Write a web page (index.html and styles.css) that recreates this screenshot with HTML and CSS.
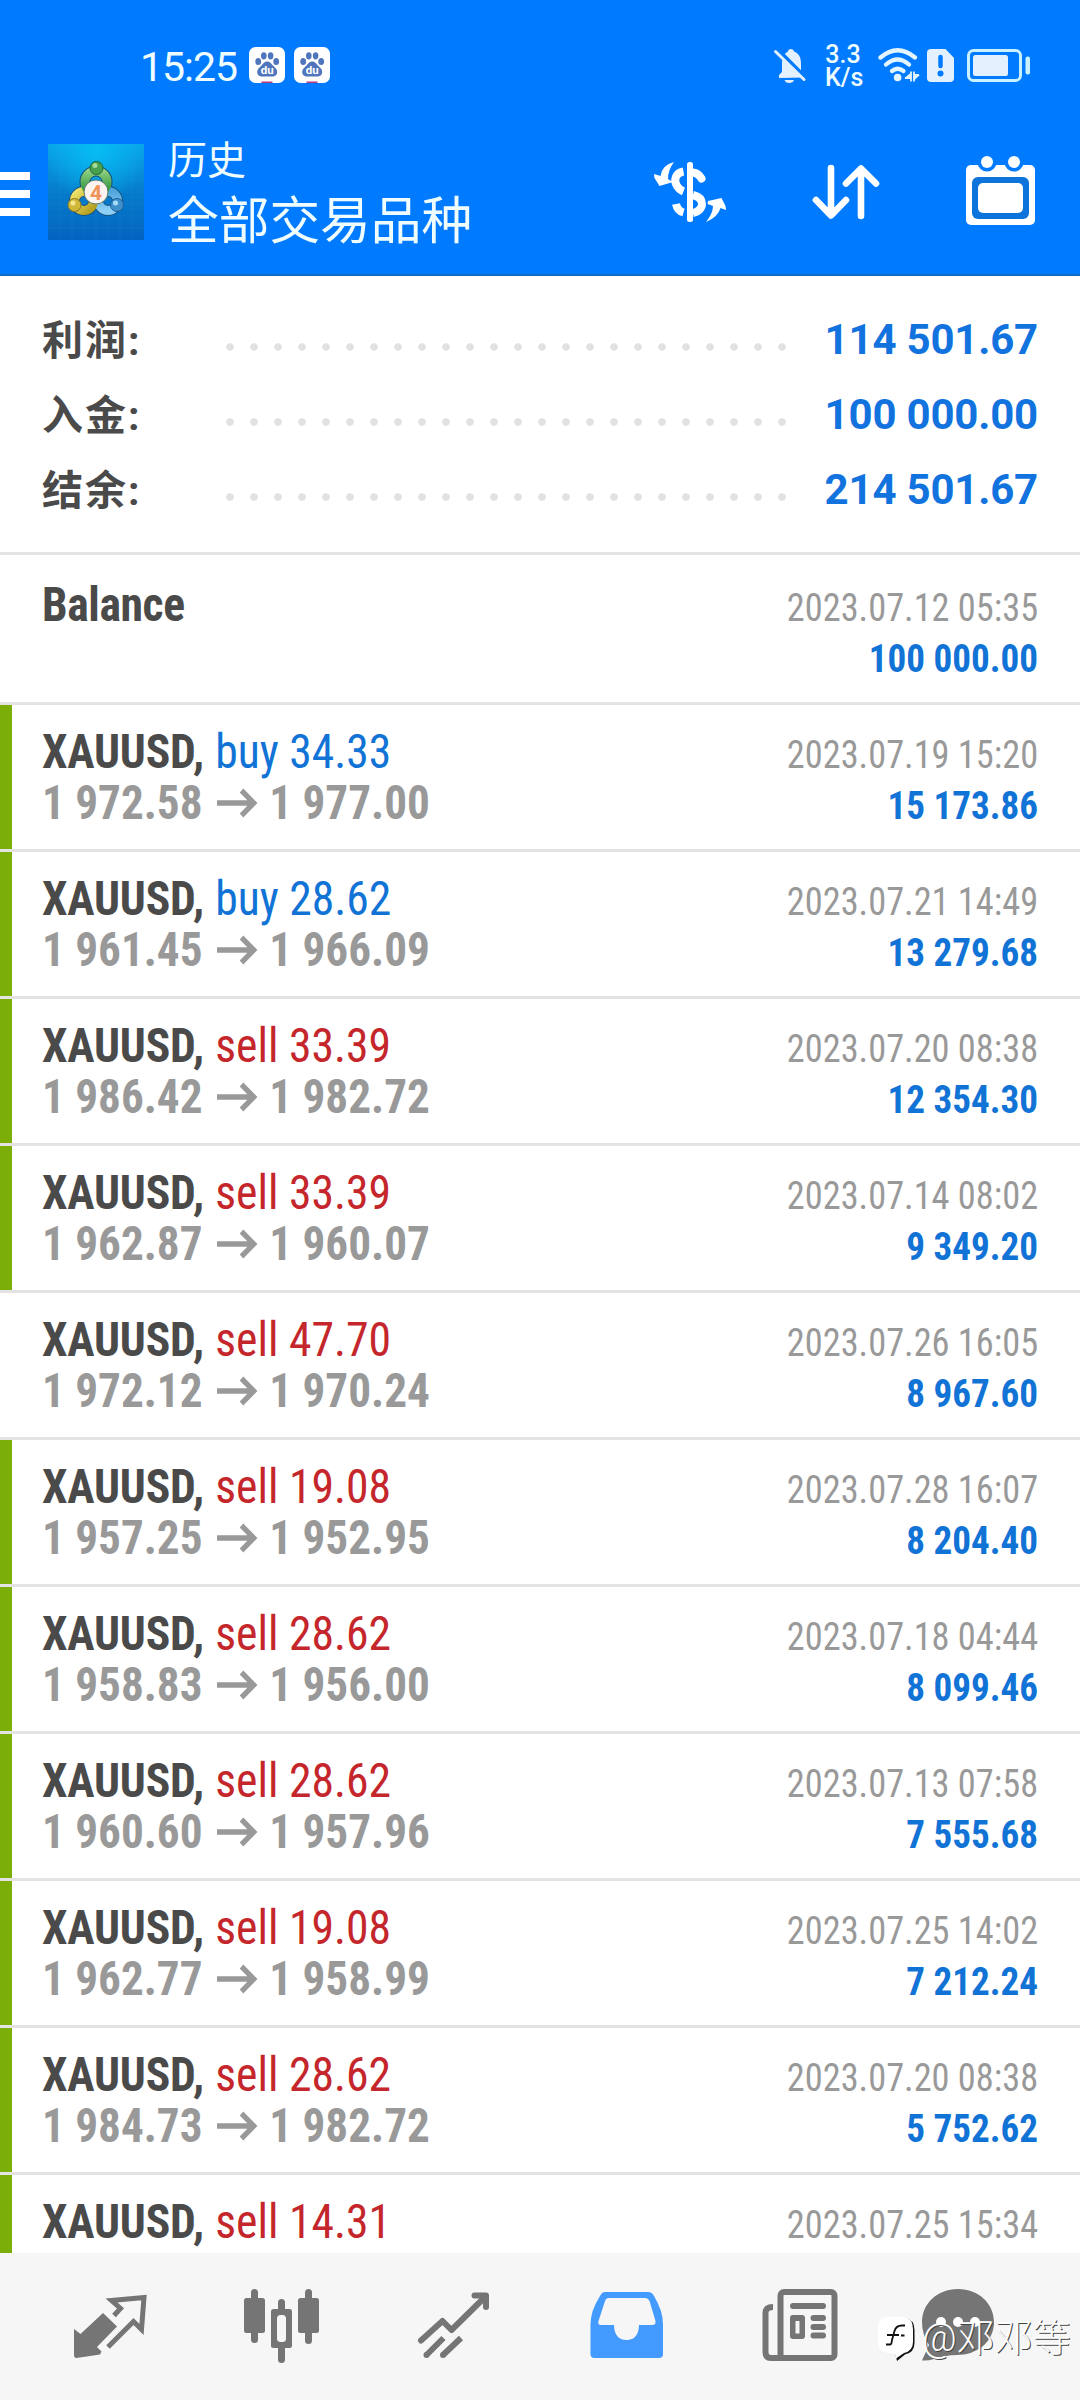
FILE: index.html
```html
<!DOCTYPE html>
<html lang="zh">
<head>
<meta charset="utf-8">
<title>历史</title>
<link rel="stylesheet" href="styles.css">
</head>
<body>
<svg class="defs">
  <symbol id="arrow" viewBox="0 0 44 30"><path d="M1 15H40M27 2.500L40 15L27 27.500" fill="none" stroke="currentColor" stroke-width="5.500"/></symbol>
  <symbol id="paw" viewBox="0 0 36 36">
    <rect width="36" height="36" rx="6.500" fill="#fff"/>
    <g fill="#4f76bd"><ellipse cx="9.200" cy="14.500" rx="2.900" ry="3.500"/><ellipse cx="14.800" cy="8.800" rx="2.800" ry="3.600"/><ellipse cx="21.600" cy="8.800" rx="2.800" ry="3.600"/><ellipse cx="27.200" cy="14.500" rx="2.900" ry="3.500"/><path d="M18.200 14.500c-3 0-4 2.300-6 4.200-2 1.900-4 3.400-4 6.300 0 3 2.300 4.500 5 4.500h10c2.700 0 5-1.500 5-4.500 0-2.900-2-4.400-4-6.300-2-1.900-3-4.200-6-4.200z"/></g>
    <text x="18.200" y="27" text-anchor="middle" font-size="11.500" font-weight="700" fill="#fff">du</text>
    <rect x="12.500" y="34.500" width="11" height="1.500" fill="#b43c78"/>
  </symbol>
</svg>

<header class="top">
  <div class="status">
    <time class="clock">15:25</time>
    <svg class="paw"><use href="#paw"/></svg>
    <svg class="paw"><use href="#paw"/></svg>
    <svg class="bell" viewBox="773 45 34 40"><path d="M779 78v-3l3-3V64c0-8 3-11 6-12.500 0-3 5-3.500 6 0 5 2 7 6 7 12v8l3 6z" fill="#e3f1ff"/><path d="M784.500 80h9.500c-.8 4-8.700 4-9.500 0z" fill="#e3f1ff"/><path d="M777 49L806 78" stroke="#007aff" stroke-width="4"/><path d="M775.500 51.500L804 79.500" stroke="#e3f1ff" stroke-width="3" stroke-linecap="round"/></svg>
    <div class="speed"><span>3.3</span><span>K/s</span></div>
    <svg class="wifi" viewBox="876 45 44 40"><g fill="none" stroke="#e3f6ff" stroke-width="4.300" stroke-linecap="round"><path d="M880.500 57.500Q897.500 43 915 57.500"/><path d="M886 64.500Q897.500 54.500 909 64.500"/><path d="M892 71Q897.500 66.500 903.500 71"/></g><circle cx="897.600" cy="77.500" r="3.800" fill="#e3f6ff"/><path d="M911 71.500v10M905 78h6M914 71.500v10M919 75h-5" stroke="#e3f6ff" stroke-width="1.800"/><path d="M904.500 78L911 72.500V78zM920 75L914 80.500V75z" fill="#e3f6ff"/></svg>
    <svg class="sim" viewBox="927 48 27 33"><path d="M4 0h14.500L27 9v20a4 4 0 0 1-4 4H4a4 4 0 0 1-4-4V4a4 4 0 0 1 4-4z" transform="translate(927 48)" fill="#e3f1ff"/><path d="M940.500 56v9" stroke="#007aff" stroke-width="4.500" stroke-linecap="round"/><circle cx="940.500" cy="72.500" r="3" fill="#007aff"/></svg>
    <svg class="battery" viewBox="966 48 65 35"><rect x="968.500" y="50.500" width="52" height="30" rx="5" fill="none" stroke="#c8f2ff" stroke-width="3"/><rect x="973" y="55" width="35" height="21" rx="2.500" fill="#e3f1ff"/><rect x="1025.500" y="56.500" width="4.500" height="18" rx="2" fill="#c8f2ff"/></svg>
  </div>
  <div class="bar">
    <svg class="menu" viewBox="0 0 30 44"><path d="M0 4h30M0 22h30M0 40h30" stroke="#fff" stroke-width="8"/></svg>
    <svg class="logo" viewBox="0 0 96 96">
      <defs>
        <linearGradient id="sky" x1="0" y1="0" x2="0" y2="1"><stop offset="0" stop-color="#0aa3ea"/><stop offset=".5" stop-color="#067ccb"/><stop offset="1" stop-color="#0463c0"/></linearGradient>
        <radialGradient id="glow" cx=".5" cy=".05" r=".55"><stop offset="0" stop-color="#06bdf2"/><stop offset="1" stop-color="#06bdf2" stop-opacity="0"/></radialGradient>
        <linearGradient id="gr" x1="0" y1="0" x2="0" y2="1"><stop offset="0" stop-color="#8fce82"/><stop offset="1" stop-color="#268f35"/></linearGradient>
        <linearGradient id="ye" x1="0" y1="0" x2="1" y2="1"><stop offset="0" stop-color="#eee36c"/><stop offset="1" stop-color="#b49c1c"/></linearGradient>
        <linearGradient id="bl" x1="0" y1="0" x2="0" y2="1"><stop offset="0" stop-color="#4fa5dc"/><stop offset="1" stop-color="#8ed0f5"/></linearGradient>
      </defs>
      <rect width="96" height="96" fill="url(#sky)"/><rect width="96" height="96" fill="url(#glow)"/>
      <path d="M0 12h96M0 24h96M0 36h96M0 48h96M0 60h96M0 72h96M0 84h96M12 0v96M24 0v96M36 0v96M48 0v96M60 0v96M72 0v96M84 0v96" stroke="#3cb4f0" stroke-opacity=".1"/>
      <g fill="none" stroke-width="11" stroke="#17507a"><circle cx="36" cy="57" r="9.500"/><circle cx="60" cy="57" r="9.500"/><circle cx="48" cy="38" r="11"/></g>
      <g fill="none" stroke-width="9"><circle cx="60" cy="57" r="9.500" stroke="url(#bl)"/><circle cx="36" cy="57" r="9.500" stroke="url(#ye)"/><circle cx="48" cy="38" r="11" stroke="url(#gr)"/></g>
      <circle cx="48.500" cy="24" r="6.500" fill="#49a04e" stroke="#1d6a33"/><circle cx="47" cy="21.500" r="2.500" fill="#a4d99a"/>
      <circle cx="26.500" cy="61" r="6.500" fill="#cfb73a" stroke="#8b7a1c"/><circle cx="25" cy="59" r="2.500" fill="#f3e98c"/>
      <circle cx="69" cy="61" r="6.500" fill="#3f8fcb" stroke="#1a5e97"/><circle cx="67.500" cy="59" r="2.500" fill="#a6dcf8"/>
      <circle cx="48" cy="48" r="12" fill="#fbf4f0" stroke="#567c6a" stroke-width="1"/>
      <text x="48" y="56" text-anchor="middle" font-size="21" font-weight="700" fill="#f0935a">4</text>
    </svg>
    <div class="titles"><p class="crumb">历史</p><h1>全部交易品种</h1></div>
    <svg class="action" viewBox="612 134 156 116"><g fill="none" stroke="#fff" stroke-width="8"><path d="M683.500 171.500C675 173 673.500 181 677 186 679 189 681 190.500 683.500 191.500"/><path d="M693 172.500C697 173 699.500 175 701.500 178.500" stroke-linecap="round"/><path d="M676 204c1 5 4 7.500 7.500 8.500"/><path d="M693 195c8 2 9 6 9 9 0 4-3.500 8-9 9"/></g><rect x="687" y="162" width="6" height="60" rx="2.500" fill="#fff"/><path d="M674 162Q662 165 660.500 176L654 174 654.500 178 659.500 186 673 182 668 179Q668 170 674 162zM706 222Q718 217 720.500 208L726 210 725.500 206 721.500 198 708 201 707.500 204 713 206Q713 213 706 222z" fill="#fff"/></svg>
    <svg class="action" viewBox="768 134 156 116"><path d="M831 168V215M816 200L831 215.500L846 200M861 216V169M846 183.500L861 168.500L876 183.500" fill="none" stroke="#fff" stroke-width="6.600" stroke-linecap="round" stroke-linejoin="round"/></svg>
    <svg class="action" viewBox="924 134 156 116"><rect x="966" y="165" width="69" height="60" rx="5" fill="#fff"/><circle cx="987" cy="162" r="9.500" fill="#007aff"/><circle cx="1014" cy="162" r="9.500" fill="#007aff"/><circle cx="987" cy="162" r="6" fill="#fff"/><circle cx="1014" cy="162" r="6" fill="#fff"/><rect x="972" y="177" width="57" height="42" rx="6" fill="#0d74dc"/><rect x="978" y="183" width="45" height="30" rx="5" fill="#fff"/></svg>
  </div>
</header>

<main>
  <section class="summary">
    <div class="total"><span class="label">利润:</span><span class="dots"></span><span class="sum">114 501.67</span></div>
    <div class="total"><span class="label">入金:</span><span class="dots"></span><span class="sum">100 000.00</span></div>
    <div class="total"><span class="label">结余:</span><span class="dots"></span><span class="sum">214 501.67</span></div>
  </section>
  <ul class="deals">
    <li class="deal balance"><div class="info"><p class="title"><b>Balance</b></p></div><div class="result"><p class="date">2023.07.12 05:35</p><p class="profit">100 000.00</p></div></li>
    <li class="deal marked"><div class="info"><p class="title"><b>XAUUSD,</b><span class="buy">buy 34.33</span></p><p class="prices">1 972.58<svg class="arrow"><use href="#arrow"/></svg>1 977.00</p></div><div class="result"><p class="date">2023.07.19 15:20</p><p class="profit">15 173.86</p></div></li>
    <li class="deal marked"><div class="info"><p class="title"><b>XAUUSD,</b><span class="buy">buy 28.62</span></p><p class="prices">1 961.45<svg class="arrow"><use href="#arrow"/></svg>1 966.09</p></div><div class="result"><p class="date">2023.07.21 14:49</p><p class="profit">13 279.68</p></div></li>
    <li class="deal marked"><div class="info"><p class="title"><b>XAUUSD,</b><span class="sell">sell 33.39</span></p><p class="prices">1 986.42<svg class="arrow"><use href="#arrow"/></svg>1 982.72</p></div><div class="result"><p class="date">2023.07.20 08:38</p><p class="profit">12 354.30</p></div></li>
    <li class="deal marked"><div class="info"><p class="title"><b>XAUUSD,</b><span class="sell">sell 33.39</span></p><p class="prices">1 962.87<svg class="arrow"><use href="#arrow"/></svg>1 960.07</p></div><div class="result"><p class="date">2023.07.14 08:02</p><p class="profit">9 349.20</p></div></li>
    <li class="deal"><div class="info"><p class="title"><b>XAUUSD,</b><span class="sell">sell 47.70</span></p><p class="prices">1 972.12<svg class="arrow"><use href="#arrow"/></svg>1 970.24</p></div><div class="result"><p class="date">2023.07.26 16:05</p><p class="profit">8 967.60</p></div></li>
    <li class="deal marked"><div class="info"><p class="title"><b>XAUUSD,</b><span class="sell">sell 19.08</span></p><p class="prices">1 957.25<svg class="arrow"><use href="#arrow"/></svg>1 952.95</p></div><div class="result"><p class="date">2023.07.28 16:07</p><p class="profit">8 204.40</p></div></li>
    <li class="deal marked"><div class="info"><p class="title"><b>XAUUSD,</b><span class="sell">sell 28.62</span></p><p class="prices">1 958.83<svg class="arrow"><use href="#arrow"/></svg>1 956.00</p></div><div class="result"><p class="date">2023.07.18 04:44</p><p class="profit">8 099.46</p></div></li>
    <li class="deal marked"><div class="info"><p class="title"><b>XAUUSD,</b><span class="sell">sell 28.62</span></p><p class="prices">1 960.60<svg class="arrow"><use href="#arrow"/></svg>1 957.96</p></div><div class="result"><p class="date">2023.07.13 07:58</p><p class="profit">7 555.68</p></div></li>
    <li class="deal marked"><div class="info"><p class="title"><b>XAUUSD,</b><span class="sell">sell 19.08</span></p><p class="prices">1 962.77<svg class="arrow"><use href="#arrow"/></svg>1 958.99</p></div><div class="result"><p class="date">2023.07.25 14:02</p><p class="profit">7 212.24</p></div></li>
    <li class="deal marked"><div class="info"><p class="title"><b>XAUUSD,</b><span class="sell">sell 28.62</span></p><p class="prices">1 984.73<svg class="arrow"><use href="#arrow"/></svg>1 982.72</p></div><div class="result"><p class="date">2023.07.20 08:38</p><p class="profit">5 752.62</p></div></li>
    <li class="deal marked"><div class="info"><p class="title"><b>XAUUSD,</b><span class="sell">sell 14.31</span></p></div><div class="result"><p class="date">2023.07.25 15:34</p></div></li>
  </ul>
</main>

<nav class="tabs">
  <svg viewBox="24 2253 172 147"><path d="M74 2329L80.500 2334 103 2313 117 2326.500 97 2347 101.500 2351.500 100 2354.500 76.500 2358Q74 2358 74 2355z" fill="#757575"/><path d="M114 2315.500L120.500 2308.500 111.500 2300.500 144 2297.500 141.500 2329.500 133.500 2321.500 108 2347" fill="none" stroke="#757575" stroke-width="5"/></svg>
  <svg viewBox="196 2253 172 147"><g fill="#757575"><rect x="251" y="2289" width="7" height="54" rx="3.500"/><rect x="244" y="2298" width="21" height="35" rx="2.500"/><rect x="278" y="2299" width="7" height="64" rx="3.500"/><rect x="271" y="2309" width="21" height="39" rx="2.500"/><rect x="305" y="2289" width="7" height="55" rx="3.500"/><rect x="298" y="2298" width="21" height="35" rx="2.500"/></g><rect x="277" y="2315" width="9" height="27" rx="3.500" fill="#f6f6f6"/></svg>
  <svg viewBox="368 2253 172 147"><g fill="none" stroke="#757575" stroke-width="6" stroke-linecap="round" stroke-linejoin="round"><path d="M421 2340.500L442.500 2321 451.500 2330 485 2297"/><path d="M474.500 2295.500H486V2307"/></g><path d="M426.500 2355L443.500 2338M443 2355L461 2338" stroke="#757575" stroke-width="6"/><circle cx="426.500" cy="2355" r="3" fill="#757575"/><circle cx="443" cy="2355" r="3" fill="#757575"/></svg>
  <svg viewBox="540 2253 172 147"><path d="M605 2292H648Q652 2292 654 2296 663 2311 663 2324V2354Q663 2358 659 2358H594.500Q590.500 2358 590.500 2354V2324Q590.500 2311 600 2296 602 2292 605 2292z" fill="#439bff"/><path d="M609 2298H645Q648 2298 649.500 2301L655.500 2321Q656 2325 652.500 2325H639Q638.500 2340 626.500 2340 614.500 2340 614 2325H601Q597.500 2325 598.500 2321L605 2301Q606 2298 609 2298z" fill="#f6f6f6"/></svg>
  <svg viewBox="712 2253 172 147"><g fill="none" stroke="#757575"><rect x="780.500" y="2292" width="54" height="66" rx="3.500" stroke-width="6"/><path d="M773 2307Q765.500 2307 765.500 2313V2352Q765.500 2358 771 2358H784" stroke-width="6"/><path d="M793 2306H823" stroke-width="6" stroke-linecap="round"/><path d="M813.500 2318H823M813.500 2327H823M813.500 2335.500H823" stroke-width="6" stroke-linecap="round"/></g><rect x="790" y="2315" width="15" height="24" rx="3" fill="#757575"/><rect x="795.500" y="2321" width="4" height="12.500" fill="#f6f6f6"/></svg>
  <svg viewBox="872 2253 172 147"><path d="M958 2289C979 2289 994 2304 994 2322 994 2342 977 2355 957 2355 948 2355 941 2357 934 2359Q928 2361 922 2360.500L929 2345Q922 2335 922 2322C922 2304 937 2289 958 2289z" fill="#757575"/><circle cx="941" cy="2322" r="5" fill="#fff"/><circle cx="958" cy="2322" r="5" fill="#fff"/><circle cx="975" cy="2322" r="5" fill="#fff"/></svg>
  <div class="watermark">
    <svg viewBox="876 2316 42 50"><path d="M889 2321H904Q914.500 2322 914.500 2333V2346Q914.500 2355.500 905 2357.500L897 2364 895.500 2358 904 2350z" fill="#111"/><path d="M887 2320H903Q913 2321 913 2332V2345Q913 2354 904 2356L896 2361.500 895 2356H888Q878 2355 878 2345V2330Q878 2321 887 2320z" fill="#fff"/><path d="M886 2347.500h4Q891.500 2348 892 2343L894.500 2334Q896 2328.500 902 2328.500h3M887 2338h12M901 2338.500h3.500" fill="none" stroke="#111" stroke-width="1.800"/></svg>
    <span>@邓邓等</span>
  </div>
</nav>
</body>
</html>
```
FILE: styles.css
```css
* { box-sizing: border-box; margin: 0; padding: 0; }

body {
  width: 1080px;
  height: 2400px;
  display: flex;
  flex-direction: column;
  overflow: hidden;
  background: #fff;
  font-family: Roboto, "Noto Sans CJK SC", sans-serif;
}

svg { display: block; flex: none; }
.defs { display: none; }

/* header */
.top { height: 276px; background: #007aff; border-bottom: 2px solid #1469c4; color: #effdff; }
.status { height: 134px; display: flex; align-items: center; padding: 0 49px 4px 140px; }
.clock { font-size: 41px; width: 109px; letter-spacing: -1px; line-height: 46px; padding-top: 4px; }
.paw { width: 36px; height: 36px; margin-right: 9px; }
.bell { width: 34px; height: 40px; margin-left: 434px; }
.speed { display: flex; flex-direction: column; width: 36px; margin: 1px 15px 0 18px; font-size: 25px; line-height: 23px; font-weight: 500; text-align: center; white-space: nowrap; }
.wifi { width: 44px; height: 40px; }
.sim { width: 27px; height: 33px; margin-left: 7px; }
.battery { width: 65px; height: 35px; margin-left: 12px; }
.bar { display: flex; height: 116px; }
.menu { width: 30px; height: 44px; margin-top: 38px; }
.logo { width: 96px; height: 96px; margin: 10px 0 0 18px; }
.titles { width: 444px; margin-left: 24px; padding-top: 2px; }
.crumb { font-size: 39px; line-height: 50px; }
h1 { font-size: 50.700px; font-weight: 400; line-height: 66px; margin-top: 3px; }
.action { width: 156px; height: 116px; }

/* totals */
main { flex: 1; min-height: 0; overflow: hidden; }
.summary { height: 279px; padding: 26px 42px 0 42px; border-bottom: 3px solid #e3e3e3; }
.total { height: 75px; display: flex; align-items: center; }
.label { width: 184px; margin-top: -6px; font-size: 41px; font-weight: 700; letter-spacing: 2px; color: #4a4a4a; }
.dots { width: 576px; height: 8px; margin-top: 15px; background: radial-gradient(circle at 4px 4px, #e1e1e1 3.400px, transparent 4.100px) 0 0 / 24px 8px; }
.sum { flex: 1; text-align: right; white-space: nowrap; font-size: 42px; font-weight: 700; letter-spacing: -.2px; color: #1273de; }

/* deals */
.deals { list-style: none; font-family: "Roboto Condensed", Roboto, sans-serif; }
.deal { height: 147px; display: flex; justify-content: space-between; padding: 21px 42px 0 42px; border-bottom: 3px solid #e3e3e3; }
.marked { background: linear-gradient(to right, #7bae08 12px, #fff 12px) padding-box; }
.balance { height: 150px; padding-top: 24px; }
.title, .prices { display: flex; height: 51px; line-height: 51px; font-size: 48px; white-space: nowrap; transform-origin: left; }
.title { transform: scaleX(.95); }
.title b { color: #4a4a4a; letter-spacing: -.2px; }
.title span { margin-left: 12px; }
.balance b { letter-spacing: -.4px; }
.buy { color: #1273d6; }
.sell { color: #c4262b; }
.prices { font-weight: 700; color: #999; transform: scaleX(.941); }
.arrow { width: 46px; height: 30px; margin: 11px 12px 0 13px; }
.result { padding-top: 3px; text-align: right; white-space: nowrap; font-size: 39.500px; line-height: 51px; }
.date { color: #999; transform: scaleX(.92); transform-origin: right; }
.profit { color: #1273d6; font-weight: 700; transform: scaleX(.94); transform-origin: right; }

/* tab bar */
.tabs { position: relative; height: 147px; display: flex; padding-left: 24px; background: #f6f6f6; }
.tabs > svg { width: 172px; height: 147px; }
.tabs > svg:nth-of-type(6) { margin-left: -12px; }
.watermark { position: absolute; left: 876px; top: 60px; display: flex; align-items: center; color: #fff; font-size: 38px; font-weight: 300; white-space: nowrap; text-shadow: 1px 1px 0 #444; }
.watermark svg { width: 42px; height: 50px; }
.watermark span { margin-left: 4px; line-height: 50px; }
```
